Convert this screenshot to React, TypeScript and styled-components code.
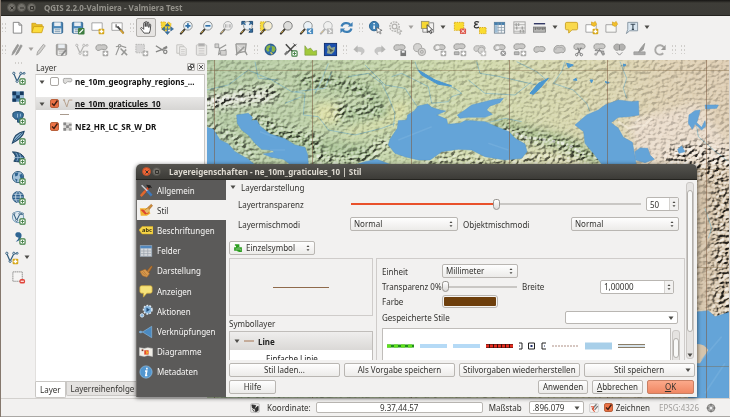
import React, { ReactNode } from "react";
import styled, { createGlobalStyle, css } from "styled-components";

const GlobalStyle = createGlobalStyle`
  * { box-sizing: border-box; }
  body { margin: 0; background: #f2f1f0; }
  body, button, input, select { font-family: "Noto Sans", "Open Sans", sans-serif; font-size: 8px; color: #33322f; }
`;

/* ---------- Shared icon parts ---------- */

const G = "#979795";
const L = "#d2d1cf";

const Plus = () => (
  <g>
    <rect x="9.5" y="9.5" width="5.5" height="5.5" rx="1" fill="#fff" stroke="#3d7d3f" strokeWidth="1.2" />
    <path d="M12.25 10.8v3M10.8 12.25h3" stroke="#3d7d3f" strokeWidth="1" />
  </g>
);
const Star = ({ c = "#d5a514" }: { c?: string }) => (
  <g>
    <rect x="9.2" y="9.2" width="6" height="6" rx="1" fill={c} />
    <path d="M12.2 10.2v4M10.2 12.2h4" stroke="#fff" strokeWidth="1.5" />
  </g>
);
const Mag = ({ fill = "#eaf1f6", rim = "#8a8e8f", handle = "#3e3a30" }) => (
  <g>
    <path d="M2 14.5 6.5 9.5" stroke={handle} strokeWidth="2.2" strokeLinecap="round" />
    <path d="M4.5 11.5 2.5 13.7" stroke="#d8a73c" strokeWidth="1" />
    <circle cx="9.5" cy="6.2" r="4.6" fill={fill} stroke={rim} strokeWidth="1" />
  </g>
);
const Blob = ({ y = 0 }: { y?: number }) => (
  <path transform={`translate(0 ${y})`} d="M2 6C2 3 5 2.5 8 3.2c2-.6 6-.5 6 2.3 0 2.8-3 3.3-4.5 2.4C7.500 7 6 9.500 4 9 2.500 8.600 2 7.500 2 6Z" fill="#c9c8c6" stroke={G} strokeWidth="1" />
);
const Nodes = ({ c = "#315d7d" }: { c?: string }) => (
  <g stroke={c} fill="#fff">
    <path d="M3 4 6.500 12 10.500 4M10.500 4h3" fill="none" strokeWidth="1.300" />
    <circle cx="3" cy="3.500" r="1.200" /><circle cx="6.500" cy="12" r="1.200" /><circle cx="10.500" cy="3.500" r="1.200" /><circle cx="14" cy="3.500" r="1" />
  </g>
);
const Disk = ({ a, b }: { a: string; b: string }) => (
  <g>
    <rect x="2.500" y="2.500" width="11" height="11.500" rx="1" fill={a} stroke={b} />
    <rect x="4.500" y="2.500" width="7" height="4" fill="#e9eef2" />
    <rect x="4" y="9" width="8" height="5" fill="#f4f4f2" />
    <path d="M5 10.500h6M5 12.500h6" stroke={b} strokeWidth=".7" />
  </g>
);
const Globe = ({ c = "#3f7fae" }: { c?: string }) => (
  <g fill="none" stroke="#1f4f77">
    <circle cx="7.500" cy="7.500" r="5.800" fill={c} />
    <ellipse cx="7.500" cy="7.500" rx="2.600" ry="5.800" stroke="#dfeaf2" strokeWidth=".8" />
    <path d="M1.800 7.500h11.500M2.800 4.500h9.500M2.800 10.500h9.500" stroke="#dfeaf2" strokeWidth=".8" />
  </g>
);

const icons: Record<string, ReactNode> = {
  fileNew: <path d="M3.500 2.500h6l3 3v8.500h-9ZM9.500 2.500v3h3" fill="#fff" stroke="#777" strokeWidth=".9" />,
  open: (
    <g stroke="#c99a12" strokeWidth=".8">
      <path d="M2 13V3.500h4l1 1.500h6v2" fill="#e9bf26" />
      <path d="M2 13.500 4 7h10.500l-2 6.500Z" fill="#fbdc3c" />
    </g>
  ),
  save: <Disk a="#4a87b8" b="#2f628b" />,
  saveAs: (<g><Disk a="#4a87b8" b="#2f628b" /><rect x="8.500" y="8.500" width="7" height="7" rx="1" fill="#3d7d3f" /><path d="m10 14 4-4" stroke="#fff" strokeWidth="1.500" /></g>),
  composer: (<g><path d="M2 3h11v8H2Z" fill="#fff" stroke="#999" strokeWidth=".9" /><Star /></g>),
  composerMgr: (
    <g><path d="M2 3h11v8H2Z" fill="#fff" stroke="#999" strokeWidth=".9" /><path d="m8 7 6.500 7" stroke="#454545" strokeWidth="2" /><path d="m11 10.500 3.500 4" stroke="#d6a434" strokeWidth="1.800" /><path d="M6.500 4.500v3h3" fill="none" stroke="#555" strokeWidth="1.200" /></g>
  ),
  pan: <path d="M5.500 14 2 9.500c-.8-1.200.6-2 1.500-1L5 10V3.500c0-1.200 1.600-1.200 1.700 0V7 2.500c0-1.200 1.700-1.200 1.800 0V7l.3-4c.1-1.200 1.700-1 1.700.2V8l.5-3c.3-1 1.600-.7 1.500.4L12 11l-1 3Z" fill="#fff" stroke="#333" strokeWidth=".9" strokeLinejoin="round" />,
  panSel: (
    <g><path d="M2 2h5v3l3-3 3 2-1 5-5 3-4-2Z" fill="#f8d835" stroke="#dba514" strokeWidth=".8" strokeDasharray="1.500 1" /><path d="m9 3.500 2.500 3h-5ZM9 15.500l2.500-3h-5ZM3 9.500 6 7.200v4.600ZM15.500 9.500l-3-2.300v4.600Z" fill="#3774a8" stroke="#234e75" strokeWidth=".5" /><path d="M9 7v5.500M6.500 9.700H12" stroke="#3774a8" strokeWidth="1" /></g>
  ),
  zoomIn: (<g><Mag /><path d="M9.500 3.500v5.400M6.800 6.200h5.400" stroke="#2f70a8" strokeWidth="1.800" /></g>),
  zoomOut: (<g><Mag /><path d="M6.800 6.200h5.400" stroke="#2f70a8" strokeWidth="1.800" /></g>),
  zoomOne: (<g opacity=".7"><Mag fill="#eee" /><path d="M7.300 4.500v3.600M11.700 4.500v3.600M9.500 5v.8M9.500 7v.8" stroke="#666" strokeWidth="1" /></g>),
  zoomFull: (<g><Mag /><path d="M6.500 1.500h-3.500v3.500ZM11 1.500h3.500v3.500ZM14.500 9v4h-4Z" fill="#376f9f" stroke="#1f4a71" /><path d="m4 3 3 2M13 3l-2 2M13 12l-2-3" stroke="#376f9f" strokeWidth="1.500" /></g>),
  zoomSel: (<g><path d="M1.500 2h6v9h-6Z" fill="#f7dc3c" stroke="#d9ad17" strokeDasharray="1.500 1" /><Mag fill="#f5ecd0" /></g>),
  zoomLayer: <Mag fill="#dcdcda" rim="#777" />,
  zoomLast: (<g><Mag /><rect x="8.500" y="9" width="6.500" height="6" fill="#4a8bbf" /><path d="m13 10-2.500 2 2.500 2" fill="none" stroke="#fff" strokeWidth="1.200" /></g>),
  zoomNext: (<g opacity=".6"><Mag fill="#eee" handle="#888" /><rect x="8.500" y="9" width="6.500" height="6" fill="#999" /><path d="m10.500 10 2.500 2-2.500 2" fill="none" stroke="#fff" strokeWidth="1.200" /></g>),
  refresh: (<g fill="none" stroke="#3d7fb5" strokeWidth="2.400"><path d="M2.800 7C3.500 3 9.500 2 12 5M13.200 9C12.500 13 6.500 14 4 11" /><path d="M14.500 2v5h-5ZM1.500 14V9h5Z" fill="#3d7fb5" stroke="none" /></g>),
  identify: (<g><circle cx="6.500" cy="6.500" r="5" fill="#3e81b5" stroke="#2b618e" /><path d="M6.500 5.800V9.500M6.500 3.300v1.300" stroke="#fff" strokeWidth="1.600" /><path d="m9 8 6 3-2.500.7 1.500 2.500-1 .7-1.600-2.500L10 14Z" fill="#fff" stroke="#555" strokeWidth=".7" /></g>),
  action: (<g fill="none" stroke="#b4b3b0"><circle cx="7" cy="7" r="5" strokeWidth="1.500" strokeDasharray="2 1" /><circle cx="7" cy="7" r="2.500" strokeWidth="1.300" /><path d="m10 9 5 3-2.500.5 1 2.500-1.200.5-1-2.500-1.500 1Z" fill="#eee" /></g>),
  select: (<g><rect x="1.500" y="1.500" width="8" height="7.500" fill="#f7d832" stroke="#9c9568" /><path d="M10 3h4.500v10H3V9.500" fill="none" stroke="#888" /><path d="m7.500 5 6 5.500-2.500.3 1.600 3-1.300.7-1.500-3-2 1.700Z" fill="#fff" stroke="#333" strokeWidth=".9" /></g>),
  deselect: (<g><rect x="2.500" y="2.500" width="10" height="8.500" fill="#fadc30" stroke="#d8a912" strokeDasharray="1.500 1" /><rect x="8.500" y="9" width="6.500" height="6" rx="1" fill="#dd5a4d" /><path d="m10 10.500 3.500 3.200m0-3.200L10 13.700" stroke="#fff" strokeWidth="1" /></g>),
  epsilon: (<g><path d="M7.500 2.500C5 1 2.500 2 3 3.500c.3 1 1.800 1.300 3 1.200C4 4.800 2.300 5.600 2.500 7c.3 1.700 3.500 1.800 5 .5" fill="none" stroke="#333" strokeWidth="1.300" /><rect x="8" y="8" width="7" height="6.500" fill="#fadc30" stroke="#d8a912" strokeDasharray="1.500 1" /></g>),
  table: (<g><rect x="2.500" y="2.500" width="11" height="11.500" fill="#f3f5f7" stroke="#6c7d8a" strokeWidth=".9" /><rect x="2.500" y="2.500" width="11" height="2.800" fill="#447fae" /><path d="M3 8h10M3 11h10M6.500 3v11M10 3v11" stroke="#8b9dab" strokeWidth=".8" /><rect x="3" y="5.500" width="3" height="8" fill="#9ebdd5" /></g>),
  abacus: (<g fill="none" stroke="#a2a2a0"><rect x="2" y="2" width="12" height="12" /><path d="M2 5h12M2 8.500h12M2 12h12" strokeWidth=".8" /><path d="M4.500 3.500v3M7 3.500v3M11 7v3M5 7v3M9 10.500v3M12 10.500v3" strokeWidth="1.600" /></g>),
  measure: (<g><path d="M2 4h12" stroke="#151c50" strokeWidth="1.300" /><rect x="1.500" y="7.500" width="13" height="5.500" fill="#b5b5b3" stroke="#777" strokeWidth=".8" /><path d="M3.500 8v2.500M5.500 8v2M7.500 8v2.500M9.500 8v2M11.500 8v2.500M13 8v2" stroke="#444" strokeWidth=".8" /></g>),
  tip: <path d="M3 2.500h10q1.500 0 1.500 1.500v5q0 1.500-1.500 1.500H8.500L5 14v-3.500H3Q1.500 10.500 1.500 9V4Q1.500 2.500 3 2.500Z" fill="#f9d94d" stroke="#c79c1b" strokeWidth=".9" />,
  bookNew: (<g><path d="M2 5h11v8H2Z" fill="#fff" stroke="#999" strokeWidth=".9" /><path d="m8 2 2 1 2-1.500 1.500 3L11 7 8 5.500Z" fill="#f3c02b" stroke="#c99514" strokeWidth=".6" /><Star /></g>),
  book: (<g><path d="M2 5h11v8H2Z" fill="#f7f7f5" stroke="#999" strokeWidth=".9" /><path d="m9 2 2 1 2-1.500 1.500 3L12 7 9 5.500Z" fill="#f3c02b" stroke="#c99514" strokeWidth=".6" /></g>),
  label: (<g><path d="M4 2.500h10.500v9H6L2.500 14.500 4 10Z" fill="#d9e6f0" stroke="#7d8c98" strokeWidth=".9" /><path d="M7 4.500h5M9.500 4.500V10M8.300 10h2.400" stroke="#3a4a57" strokeWidth="1.200" /></g>),

  pencils: (<g stroke={G} fill={G}><path d="m2 14 1-3.500L8 2.500l1.500 1L4.500 12ZM6 14l1-3L11.500 3l1.500 1-4.500 8Z" strokeWidth=".8" /></g>),
  pencil: <path d="m3 14 .8-3.500L10 2.500l2 1.500L6 12Z" fill={L} stroke="#a5a4a2" />,
  saveGray: (<g><Disk a="#aaa9a7" b={G} /><path d="m7 14 5-6 1.500 1.300L8.500 15Z" fill="#888" /></g>),
  nodeGray: (<g opacity=".6"><Nodes c="#8b8b89" /><Star c="#8f8f8d" /></g>),
  blobGray: (<g><Blob /><Star c="#a5a4a2" /></g>),
  nodeTool: (<g stroke={G} strokeWidth="1.200" fill="none"><path d="m2 14 4-10M2 5l5-1 6 2" /><circle cx="6" cy="4" r="1.300" fill="#eee" /><path d="m7 7 7 7M8 14l5-6" strokeWidth="1.600" /></g>),
  del: (<g opacity=".7"><rect x="2" y="2.500" width="9" height="9" fill="#ccc" stroke={G} strokeDasharray="1.500 1" /><Star c="#8f8f8d" /></g>),
  cut: (<g stroke="#858583" fill="none" strokeWidth="1.300"><path d="m2 4 8 5M2 10.500 14 6" /><circle cx="12" cy="10.500" r="1.800" /><path d="m10 7 4-2" strokeWidth="2" /></g>),
  copy: (<g fill="#eeedeb" stroke="#c2c1bf"><path d="M3 3h6l1.500 1.500V12H3Z" /><path d="M6 5h5l2 2v7H6Z" /><path d="M7.500 8h4M7.500 10h4M7.500 12h4" strokeWidth=".7" /></g>),
  paste: (<g fill="#e9e8e6" stroke="#c0bfbd"><rect x="2.500" y="3" width="11" height="11" rx="1" /><rect x="5" y="1.800" width="6" height="2.500" fill="#aaa" /><path d="M5 7h6M5 9.500h6M5 12h6" strokeWidth=".8" /></g>),
  vTool: (<g stroke={G} fill={L}><path d="m2 3 4 4 7-4M6 7l-1 6 8-5" fill="none" strokeWidth="1.300" /><path d="M7 9h6v5H7ZM1 2h4v4H1Z" strokeWidth=".8" /></g>),
  areaTool: (<g stroke={G} fill={L}><path d="M2 2h11l-1 8 2 4M2 2l1 10 9-2" strokeWidth="1.300" /><path d="m2 14 9-9" strokeWidth="1.600" /></g>),
  earth: (<g><circle cx="8" cy="8" r="5.800" fill="#2f6faa" stroke="#1d4875" /><path d="M4 4.500 7.500 3 8 5.500 6 7l1 2.500-2 1L3 8ZM9 4l3.500 1 1 3-2 3-2.500-1 .5-3Z" fill="#8cb544" /><path d="M8 11l2 2" stroke="#d8c556" strokeWidth="1.500" /></g>),
  wrench: (<g><path d="M3 2.500 13 13M13 3 4 12" stroke="#4a4a48" strokeWidth="1.600" /><path d="M2 13.500 5 10" stroke="#777" strokeWidth="2.400" /><path d="m11 1.500 3 3M14.500 2l-2 2" stroke="#555" /><Plus /></g>),
  profile: <path d="M2 14V4l3 4 3-1.500 3 3.500 3.500-1V14Z" fill="#a2c93a" stroke="#7c9c3e" strokeWidth=".7" />,
  bluemap: (<g><rect x="1.500" y="1.500" width="13" height="13" fill="#1b4fae" stroke="#0f2f70" /><path d="M4 5 7 3l2 3 4-1-1 5-3 3-5-1 1-4Z" fill="#8fa38c" /><path d="m6 6 5 3-3 2Z" fill="#4b5b4e" /></g>),
  undo: (<g opacity=".6"><path d="M4 6.500c5-2 9 0 9 3 0 1.500-1 3-3.500 4 2-3 .5-4-5.500-3.500" fill="#aaa" stroke={G} strokeWidth=".6" /><path d="m1.500 8 4.500-4.500v8Z" fill="#8f8f8d" /></g>),
  redo: (<g opacity=".6" transform="translate(16 0) scale(-1 1)"><path d="M4 6.500c5-2 9 0 9 3 0 1.500-1 3-3.500 4 2-3 .5-4-5.500-3.500" fill="#aaa" stroke={G} strokeWidth=".6" /><path d="m1.500 8 4.500-4.500v8Z" fill="#8f8f8d" /></g>),
  blobSave: (<g><Blob /><rect x="9" y="9" width="6" height="6" fill="#777" /><rect x="10.500" y="9.500" width="3" height="2" fill="#eee" /></g>),
  rings: (<g fill="#d4d3d1" stroke="#a5a4a2"><circle cx="6" cy="6" r="4.300" /><circle cx="10.500" cy="10.500" r="4" /><circle cx="10.500" cy="10.500" r="1.500" /></g>),
  blobRing: (<g><Blob /><circle cx="6" cy="5.800" r="2" fill="#f2f1f0" /><Star c="#a9a8a6" /></g>),
  blobDual: (<g><Blob y={-1} /><path d="M2.500 10.500h5v3h-5Z" fill="#bbb" stroke={G} /><Star c="#a9a8a6" /></g>),
  blobFade: (<g opacity=".8"><Blob y={1} /><circle cx="10" cy="9" r="3.500" fill={L} stroke={G} /><Star c="#b3b2b0" /></g>),
  blobDel: (<g><Blob /><circle cx="6" cy="6" r="1.800" fill="#eee" /><circle cx="12" cy="12" r="3" fill="#999" /><path d="m10.800 10.800 2.400 2.400m0-2.400-2.400 2.400" stroke="#fff" /></g>),
  reshape: <Blob y={2} />,
  offset: (<g><path d="M2 9c0-4 3-6 6-5 3-1 6 0 6 4 0 3-2 4-4 3-3 1-8 2-8-2Z" fill="#c9c8c6" stroke={G} /><path d="M4 8.500c0-3 2-3 4-2.500 3-.5 4 0 4 2.300" fill="none" stroke="#aaa" /></g>),
  split: (<g><Blob y={-1} /><path d="m5 14 5-8M9.500 14 6 6" stroke="#777" strokeWidth="1.200" /><circle cx="5" cy="13.500" r="1.300" fill="#eee" stroke="#777" /><circle cx="10" cy="13.500" r="1.300" fill="#eee" stroke="#777" /></g>),
  splitTwo: (<g><Blob y={-1} /><path d="m4 14 4-6 4 6M3 9l10 1" stroke="#888" strokeWidth="1.200" fill="none" /><circle cx="4" cy="13" r="1.500" fill="#aaa" /><circle cx="12" cy="12.500" r="1.800" fill="#999" /></g>),
  merge: (<g><path d="M8 3C5 1 1.500 3 2 6c.5 3 4 4 6 1.500C10 10 13.500 9 14 6c.5-3-3-5-6-3Z" fill="#b3b2b0" stroke={G} /><path d="M8 3v6M5 11l3 3 3-3" stroke="#888" fill="none" /></g>),
  brush: (<g><path d="M2 13.500h12v-3H2Z" fill="#aaa" stroke={G} strokeWidth=".8" /><path d="m7 11 2-4 4.500-5.500L12 8Z" fill="#999" stroke={G} /></g>),
  rotate: (<g><path d="M12 12A5 5 0 1 1 12.500 5.500" fill="none" stroke="#aaa9a7" strokeWidth="2" /><path d="m14.500 3v5.500H9.500Z" fill="#9b9a98" /></g>),

  vector: (<g><Nodes /><Plus /></g>),
  raster: (<g><rect x="1.500" y="1.500" width="12" height="11" fill="#5b8db8" /><path d="M1.500 1.500h4v4h-4ZM9.500 1.500h4v4h-4ZM5.500 5.500h4v3.500h-4ZM1.500 9h4v3.500h-4Z" fill="#16385c" /><path d="M9.500 5.500h4V9h-4Z" fill="#9dbdd8" /><Plus /></g>),
  postgis: (<g><path d="M2 3.500C4 1 11 1 13 3.500c1 3-1 6-3 6.500v3H7V9.500L5 10 2 7Z" fill="#3b719d" stroke="#1c4668" /><path d="M7 4v4M10 4v3" stroke="#a2c2dc" /><Plus /></g>),
  spatialite: (<g><path d="M1.500 14C3 7 8 2.500 14 1.500 13 7 7 11 1.500 14Z" fill="#89b0cf" stroke="#1f4566" strokeWidth="1.200" /><path d="M3 12 12 3" stroke="#315d7d" /><Plus /></g>),
  mssql: (<g><path d="M1.500 2C7 2 12 4 14 8l-3 5-8-1C6 8 5 5 1.500 2Z" fill="#315f88" stroke="#173c5b" /><path d="M5 3c3 3 3 6 1 9M9 4c2 3 2 6 0 9M3 8h10" stroke="#9dbdd8" fill="none" strokeWidth=".8" /><Plus /></g>),
  wms: (<g><circle cx="7.500" cy="7.500" r="6" fill="#a5c3da" stroke="#315d7d" /><path d="M4 3.500 8 2.500 7 6 4.500 7ZM9 5l3-1 1 4-2.500 2ZM4 9l3 1-1 3Z" fill="#2f6592" /><Plus /></g>),
  wcs: (<g><Globe c="#2b5f8e" /><Plus /></g>),
  wfs: (<g><circle cx="7.500" cy="7.500" r="6" fill="#dce7ef" stroke="#7097b4" /><g transform="translate(.5 1) scale(.85)"><Nodes /></g><Plus /></g>),
  comma: (<g><path d="M6.500 2.500c4-1 5.500 2 4.500 5-1 3-3 4.500-6 5 1.500-1.500 3-2.500 3-4.500-3 .5-5-4-1.500-5.500Z" fill="#2f6592" /><Plus /></g>),
  newVector: (<g><Nodes /><Star /></g>),
  remove: (<g><rect x="2" y="2" width="10" height="10" fill="#f6f5f4" stroke="#8d8d8b" strokeDasharray="1.500 .5" /><rect x="9" y="9.500" width="6" height="5" rx="2" fill="#e0443a" /><path d="M10.300 12h3.400" stroke="#fff" strokeWidth="1.200" /></g>),

  general: (<g><path d="m3 14 9-10" stroke="#dc4a24" strokeWidth="2.600" /><path d="m2 15 5-5.500" stroke="#dd6b30" strokeWidth="2.600" /><path d="m3 2.500 8 8" stroke="#c9ccd0" strokeWidth="1.600" /><path d="m9.500 9 5 5.500" stroke="#3e77b8" strokeWidth="2.800" /><path d="m8 2 5 .5 2 3.500-2-1-2 1.500Z" fill="#222" /></g>),
  style: (<g><path d="M1 6h10l2 6-4 2.500H2Z" fill="#f0b432" /><path d="M2 8c3-2 5 2 8 0l1 4-4 1Z" fill="#dc4530" /><path d="m7 8 3-3 4-3.500L15.500 3 12 7l-2 4Z" fill="#cd8d38" stroke="#a05e22" strokeWidth=".6" /><path d="M6 8.500 10.500 6 12 9l-3 3Z" fill="#e8bb68" /></g>),
  labels: (<g><path d="M0 8 3.500 4H16v8.500H3.500Z" fill="#f6d648" stroke="#d6aa22" strokeWidth=".6" /><text x="3.500" y="10.500" fontSize="6.500" fontWeight="700" fill="#3d3410">abc</text></g>),
  fields: (<g><rect x="1.500" y="2" width="13" height="12" fill="#d7dade" stroke="#a1aebb" /><rect x="1.500" y="2" width="13" height="3" fill="#5388bd" /><path d="M5.500 5v9M10 5v9M2 8h12M2 11h12" stroke="#9aa2aa" strokeWidth=".8" /></g>),
  rendering: (<g><path d="m8 9 6-7 1.500 1-5 8Z" fill="#b97936" stroke="#80501f" strokeWidth=".6" /><path d="M1 8.500 7 6l5 5-3 4-5-1.500Z" fill="#d99a4e" stroke="#a76b2c" strokeWidth=".7" /><path d="m3 9 4 4M5 8l4 5" stroke="#9b632b" strokeWidth=".6" /></g>),
  display: <path d="M3 2h10q2 0 2 2v4.500q0 2-2 2H9L5 15v-4.500H3q-2 0-2-2V4q0-2 2-2Z" fill="#f6e37b" stroke="#d0a938" strokeWidth=".8" />,
  actions: (<g fill="#86b5dc"><circle cx="10" cy="6.500" r="4.500" stroke="#dfe9f2" strokeWidth="2.400" strokeDasharray="2 1.200" /><circle cx="10" cy="6.500" r="4" /><path d="m8.500 4 4 2.500-4 2.500Z" fill="#244f7c" /><circle cx="3.500" cy="13" r="2" stroke="#dfe9f2" /></g>),
  joins: (<g><path d="M4 8 14.500 1.500v13Z" fill="#4b8ac1" stroke="#8dbbe0" strokeWidth=".7" /><path d="M0 8h4M2 6.500v3" stroke="#79aeda" strokeWidth="1.500" /></g>),
  diagrams: (<g><path d="M.5 3 6 4l4-1 5.500 1v9L10 12l-4 1-5.500-1Z" fill="#f1eee7" stroke="#ccc" strokeWidth=".6" /><path d="M6 6h5v5H6Z" fill="#e24a2c" /><path d="M3 5h2v2H3Z" fill="#7c3627" /><path d="m8 6 3 2.500L8.500 11Z" fill="#f1b530" /></g>),
  metadata: (<g><circle cx="8" cy="8" r="7" fill="#5296cf" stroke="#91c1e8" strokeWidth=".8" /><path d="M9 3v2M7 7h1.800L7.800 12H9.500" stroke="#fff" strokeWidth="1.800" fill="none" /></g>),
  lineSym: (<g fill="none" stroke="#b29a84"><path d="m3 3 4 10 3-10h5" strokeWidth="1.300" /><circle cx="3" cy="3" r="1" /></g>),
  polySym: <path d="M2 5q0-2 3-1.500h8q1.500 0 1.300 3-.3 3-4 2l-2-.5-3 3Q2 11 2 8Z" fill="#dedddb" stroke="#8e8e8c" />,
  rasterSym: (<g><rect x="2" y="2" width="12" height="12" fill="#d8d7d5" /><path d="M2 2h4v4H2ZM6 6h4v4H6ZM2 10h4v4H2ZM10 4h4v3h-4Z" fill="#888" /><path d="M10 10h4v4h-4Z" fill="#a2a19f" /></g>),
  cursorPos: (<g><rect x="1" y="1" width="14" height="14" rx="2" fill="#e9e8e6" stroke="#aaa" /><path d="m3 3 6 1-2 5-3-1ZM8 9l5-4v7l-4 2ZM4 10l3 4" fill="#333" stroke="#222" strokeWidth="1.200" /></g>),
  stop: (<g><rect x="1" y="1" width="14" height="14" rx="2" fill="#f7f5f3" stroke="#bbb" /><path d="m5 10 7-8M9 11l5-6" stroke="#777" strokeWidth="2" /><path d="M3 6h4v4M5 9l4 5" stroke="#e15233" strokeWidth="1.800" fill="none" /></g>),
  crs: (<g><circle cx="8" cy="8" r="6" fill="#b5b4b2" stroke="#7c7b79" strokeWidth="1.500" /><circle cx="8" cy="8" r="3" fill="#eee" stroke="#888" /><path d="M8 1v4M8 11v4M1 8h4M11 8h4" stroke="#666" strokeWidth="1.500" /></g>),
  single: (<path d="M3 3h6v2H6v3h7v5h-3v-2H3V8h3M10 13l-3-1" fill="none" stroke="#2c9e20" strokeWidth="2.400" />),
};

const Svg = styled.svg<{ $s?: number }>`
  display: block;
  flex: none;
  width: ${(p) => p.$s ?? 15}px;
  height: ${(p) => p.$s ?? 15}px;
`;
const Icon = ({ name, size }: { name: string; size?: number }) => (
  <Svg $s={size} viewBox="0 0 16 16" aria-hidden="true">{icons[name]}</Svg>
);

/* ---------- Window frame ---------- */

const Window = styled.div`
  position: relative;
  display: flex;
  flex-direction: column;
  min-height: 100vh;
  background: #f2f1f0;
  border-left: 1px solid #85786d;
`;
const TitleBar = styled.header<{ $dialog?: boolean }>`
  display: flex;
  flex: none;
  align-items: center;
  height: 16px;
  gap: 1px;
  padding-left: 6px;
  color: ${(p) => (p.$dialog ? "#dfdbd2" : "#94928b")};
  background: linear-gradient(${(p) => (p.$dialog ? "#55544f, #3c3b37" : "#161513, #3e3d38 20%, #3c3b37")});
  border-bottom: 1px solid #24231f;
  border-radius: ${(p) => (p.$dialog ? "5px 5px 0 0" : "0")};
`;
const WindowButton = styled.button<{ $active?: boolean }>`
  width: 9px;
  height: 9px;
  padding: 0;
  display: grid;
  place-items: center;
  border: 1px solid ${(p) => (p.$active ? "#b9512c" : "#55534d")};
  border-radius: 50%;
  background: ${(p) => (p.$active ? "#ee6536" : "#73716b")};
  color: #33312d;
`;
const WinTitle = styled.h1`
  margin: 0 0 0 7px;
  font-size: 8px;
  line-height: 14px;
  font-weight: 700;
  white-space: nowrap;
`;
const WinGlyph = ({ d }: { d: string }) => (
  <Svg $s={6} viewBox="0 0 6 6" aria-hidden="true"><path d={d} fill="none" stroke="currentColor" /></Svg>
);

/* ---------- Toolbars ---------- */

const Grip = styled.span<{ $flat?: boolean }>`
  flex: none;
  width: ${(p) => (p.$flat ? 8 : 5)}px;
  height: ${(p) => (p.$flat ? 5 : 10)}px;
  margin: ${(p) => (p.$flat ? "0 0 1px" : "0 2px")};
  background-image: radial-gradient(#d0cecb 1px, transparent 1px);
  background-size: 3px 4px;
`;
const ToolBar = styled.div`
  display: flex;
  flex: none;
  align-items: center;
  height: 22px;
  ${Grip}:first-child { margin: 0 1px 0 0; }
`;
const ToolButton = styled.button<{ $on?: boolean; $w?: number }>`
  flex: none;
  display: grid;
  place-items: center;
  width: ${(p) => p.$w ?? 20}px;
  height: 19px;
  padding: 0;
  border: 1px solid ${(p) => (p.$on ? "#b0aeab" : "transparent")};
  border-radius: 2px;
  background: ${(p) => (p.$on ? "#e6e4e2" : "none")};
`;
const Caret = ({ faint }: { faint?: boolean }) => (
  <Svg $s={6} viewBox="0 0 6 6" aria-hidden="true"><path d="M0.500 1.500h5L3 5Z" fill={faint ? "#a3a19e" : "#4d4c48"} /></Svg>
);
/* "|" is a grip; v, w and x are drop-down arrows: normal, disabled, disabled and tight. */
const Tools = ({ items }: { items: string }) => (
  <>
    {items.split(" ").map((n, i) =>
      n === "|" ? <Grip key={i} />
      : /^[vwx]$/.test(n) ? <ToolButton key={i} $w={n === "x" ? 4 : 12} aria-label="Mehr"><Caret faint={n !== "v"} /></ToolButton>
      : <ToolButton key={i} $on={n === "pan"} aria-label={n}><Icon name={n} /></ToolButton>
    )}
  </>
);

const Work = styled.div`
  display: flex;
  flex: 1;
  min-height: 0;
`;
const SideTools = styled.div`
  flex: none;
  width: 34px;
  display: flex;
  flex-direction: column;
  align-items: center;
  padding-top: 1px;
  button { height: 20px; }
`;
const SplitTool = styled.div`
  display: flex;
  align-self: stretch;
`;

/* ---------- Layer panel ---------- */

const LayerPanel = styled.section`
  flex: none;
  width: 170px;
  display: flex;
  flex-direction: column;
  margin-right: 2px;
`;
const PanelHead = styled.div`
  display: flex;
  align-items: center;
  gap: 2px;
  height: 14px;
  h2 { flex: 1; margin: 0; padding-left: 1px; font-size: 8px; font-weight: 400; }
`;
const TinyButton = styled.button`
  width: 8px;
  height: 8px;
  padding: 0;
  display: grid;
  place-items: center;
  border: 1px solid #b5b3b0;
  border-radius: 1px;
  background: #f2f1f0;
  color: #555;
`;
const Tree = styled.div`
  flex: 1;
  background: #fff;
  border: 1px solid #c9c7c4;
  border-left-color: #e2e0de;
`;
const TreeRow = styled.div<{ $sel?: boolean }>`
  display: flex;
  align-items: center;
  height: 13px;
  margin-bottom: ${(p) => (p.$sel ? 0 : 9)}px;
  padding-left: 3px;
  font-weight: 700;
  color: #111;
  background: ${(p) => (p.$sel ? "linear-gradient(#e9e8e7, #d6d5d3)" : "none")};
  label { margin-left: 2px; white-space: nowrap; text-decoration: ${(p) => (p.$sel ? "underline" : "none")}; }
`;
const Expander = styled.span`
  width: 11px;
  flex: none;
`;
const Check = styled.input`
  appearance: none;
  flex: none;
  width: 9px;
  height: 9px;
  margin: 0 3px 0 0;
  border: 1px solid #aaa7a3;
  border-radius: 2px;
  background: #fff;
  &:checked {
    border-color: #b9613c;
    background: #ec7245 url("data:image/svg+xml,%3Csvg xmlns='http://www.w3.org/2000/svg' viewBox='0 0 8 8'%3E%3Cpath d='M1.500 4 3.500 6 7 1' fill='none' stroke='%23402015' stroke-width='1.400'/%3E%3C/svg%3E") center / 8px;
  }
`;
const SymbolRow = styled.div`
  height: 10px;
  margin-left: 24px;
  padding-top: 4px;
  &::after { content: ""; display: block; width: 9px; height: 1px; background: #a99b8e; }
`;
const TabRow = styled.div`
  display: flex;
  height: 16px;
`;
const Tab = styled.button<{ $on?: boolean }>`
  padding: 0 4px;
  height: ${(p) => (p.$on ? 16 : 14)}px;
  border: 1px solid #c9c7c4;
  border-top: 0;
  border-radius: 0 0 2px 2px;
  background: ${(p) => (p.$on ? "#fff" : "#e4e2e0")};
  white-space: nowrap;
`;

/* ---------- Map ---------- */

const MapSvg = styled.svg`
  display: block;
  flex: 1;
  min-width: 0;
  align-self: stretch;
  border-right: 1px solid #d9d7d5;
`;
const Sea = styled.path`
  fill: #64a4d8;
  stroke: #5798cc;
  stroke-width: 1.500px;
`;
const River = styled.path`
  fill: none;
  stroke: #74aec0;
  stroke-width: 2px;
`;
const Relief = styled.g`
  mix-blend-mode: hard-light;
`;

const MapView = () => (
  <MapSvg viewBox="207 60 522 338" preserveAspectRatio="xMinYMin slice" role="img" aria-label="Karte">
    <defs>
      <linearGradient id="land" x1="0" x2="1">
        <stop offset="0" stopColor="#b5cba5" />
        <stop offset=".3" stopColor="#c1d3a8" />
        <stop offset=".52" stopColor="#d1d9ac" />
        <stop offset=".72" stopColor="#d9d7af" />
        <stop offset=".88" stopColor="#dfd1b3" />
        <stop offset="1" stopColor="#dfceb4" />
      </linearGradient>
      <filter id="soft"><feGaussianBlur stdDeviation="12" /></filter>
      <filter id="relief" x="0" y="0" width="1" height="1" colorInterpolationFilters="sRGB">
        <feTurbulence type="fractalNoise" baseFrequency=".22 .3" numOctaves="3" seed="7" />
        <feDiffuseLighting surfaceScale="2.6" lightingColor="#fff">
          <feDistantLight azimuth="225" elevation="31" />
        </feDiffuseLighting>
      </filter>
      <mask id="hills">
        <rect x="200" y="60" width="530" height="340" fill="#383838" />
        <g transform="translate(205 60) scale(.33333)" filter="url(#soft)" fill="none" stroke="#fff" strokeLinecap="round">
          <path d="M0 130 200 100" strokeWidth="50" />
          <path d="M290 60 400 70 480 90 520 150 400 165M410 130 400 180" strokeWidth="26" />
          <path d="M150 180 240 220 330 240 340 300 480 290 540 250" strokeWidth="34" />
          <path d="M10 195 80 230 150 290" strokeWidth="22" />
          <path d="M670 310 740 290 860 315 1000 295 1120 300" strokeWidth="24" />
          <path d="M890 205 980 235 1100 260 1180 305" strokeWidth="30" />
          <path d="M1430 300 1570 310V760" strokeWidth="100" />
        </g>
      </mask>
    </defs>
    <rect x="207" y="60" width="522" height="338" fill="url(#land)" />
    <g transform="translate(205 60) scale(.33333)">
      <g filter="url(#soft)">
        <path d="M0 130 200 105" stroke="#dcdccf" strokeWidth="30" />
        <path d="M330 130h70v60h-70ZM560 130l60 0-40 60-160 40 0-20 130-30Z" fill="#dde0a8" />
        <path d="M280 60 400 70 500 95 530 150 400 165M100 200 340 260 500 280" stroke="#a6c092" strokeWidth="36" fill="none" />
        <path d="M860 190 960 220 1080 250 1190 300" stroke="#a9bd8d" strokeWidth="46" fill="none" />
        <path d="M1270 180 1480 130 1570 250V310H1300Z" fill="#eadccb" />
        <path d="M1450 320h130v430h-130Z" fill="#d3c1a7" />
      </g>
      <River d="M5 90 70 75 130 30 200 60 260 95 300 100 295 165 340 170 370 210 450 225 530 205 570 190M150 5l10 50 60 5M240 130l50-20M370 10 350 60 330 100M430 50l60-10 40 30 20 40 20 50-5 40M480 15l60 60 60 10 40 60M560 50l30-10 80 40 10 50M270 95l90-10 20-50" />
      <River d="M630 5l10 30 50 30 60 20 20 15-30 10-10 15-50 5M815 5l10 35 60 10 110 25 30-15-30-25-60-30M930 105l50-40M930 105l-90-5-50-40M1080 5l-10 30-25 35 60 20 40 40 10 25M1245 5l20 50-10 30 10 30M840 190l60-15 50 10M1475 200l5 30 40 35 50 40M1500 445l20 60-10 30" />
    </g>
    <Relief mask="url(#hills)" opacity=".85">
      <rect x="207" y="60" width="522" height="338" filter="url(#relief)" />
    </Relief>
    <g transform="translate(205 60) scale(.33333)">
      <path d="m1085 10 20 5-15 8ZM1000 70 1030 55 1005 85 985 103 975 100ZM1105 60l8-5 3 6ZM1155 60l8 0-3 8ZM1200 65l12 2-4 4ZM1255 12l8 3-7 4ZM640 30l50 30 50 18-40-5-50-28Z" fill="#4a97d0" stroke="#4a97d0" strokeWidth="3" />
      <path d="M8 130 60 115 120 118M905 210 960 232 1030 240 1090 255 1140 285" stroke="#fff" strokeWidth="8" strokeDasharray="10 7 5 6" fill="none" opacity=".6" />
      <path d="M1240 185l30 20 50-10 20-20M1290 190l20-20" stroke="#f7eedf" strokeWidth="6" fill="none" opacity=".6" />
      <Sea d="M95 165 130 160 142 172 140 182 155 180 165 198 195 222 240 236 270 255 300 262 308 285 310 315H258L235 298 200 292 175 282 208 277 202 271 170 268 150 250 130 225 110 210 97 190Z" />
      <Sea d="M0 200 25 208 45 240 70 252 90 275 130 298 150 315H0Z" />
      <Sea d="M555 238 577 205 580 182 605 180 608 165 628 152 640 138 668 132 680 142 705 150 722 153 695 165 725 178 728 193 765 190 780 182 800 182 840 185 870 198 912 215 930 235 960 252 966 275 950 295 900 300 840 290 800 270 760 268 710 275 675 300 640 300 600 290 570 280 550 255Z" />
      <Sea d="M757 165 780 150 800 135 860 120 895 115 885 128 855 138 845 150 862 163 840 172 790 172 765 175Z" />
      <Sea d="M450 315 480 305 515 298 560 315Z" />
      <Sea d="M1145 165 1180 150 1200 135 1240 120 1280 125 1300 123 1302 165 1270 170 1240 172 1218 188 1240 205 1255 232 1282 247 1288 280 1294 315H1192L1165 280 1140 250 1136 215 1110 195 1130 178Z" />
      <Sea d="M1290 275 1305 264 1328 265 1335 285 1348 298 1320 308 1292 300Z" />
      <Sea d="M1452 165 1470 152 1485 150 1480 172 1475 188 1490 202 1500 182 1502 198 1490 210 1470 192 1462 208 1450 190ZM1500 135 1540 135 1535 145 1502 147ZM1418 268 1430 258 1440 275 1422 280Z" />
      <Sea d="M1450 758 1510 752 1530 770 1572 757V1020H1450Z" />
      <path d="M1450 860q40-20 60 10l-25 40h-35Z" fill="#d5c5ad" />
      <path d="M195 270h45M165 215l50 20M850 250l60 20M580 240l100-40M1490 900l60-70M1500 1000l60-90" stroke="#7bb3e0" strokeWidth="5" fill="none" opacity=".5" />
    </g>
    <path d="M214.500 60v338M312.500 60v338M411.500 60v338M509.500 60v338M607.500 60v338M706.500 60v338" stroke="#7b5a40" fill="none" opacity=".55" />
    <path d="M207 70.500h522M207 169.500h522M207 267.500h522M207 366.500h522" stroke="#7b6440" fill="none" opacity=".4" />
  </MapSvg>
);

/* ---------- Form controls ---------- */

const frame = css`
  border: 1px solid #b9b6b2;
  border-radius: 2px;
`;
const SelectWrap = styled.span<{ $w?: number; $plain?: boolean }>`
  position: relative;
  display: flex;
  align-items: center;
  flex: none;
  width: ${(p) => p.$w ?? 108}px;
  height: ${(p) => (p.$plain ? 13 : 14)}px;
  ${frame}
  background: ${(p) => (p.$plain ? "#fff" : "linear-gradient(#fefefe, #ecebe9)")};
  select {
    appearance: none;
    width: 100%;
    padding: 0 12px 0 3px;
    border: 0;
    background: none;
    line-height: 12px;
  }
  > svg:last-child {
    position: absolute;
    right: 3px;
    top: 3px;
    pointer-events: none;
  }
  > svg:first-child { margin-left: 3px; }
`;
const UpDown = () => (
  <Svg $s={6} viewBox="0 0 6 6" aria-hidden="true"><path d="M1.500 2 3 .3 4.500 2ZM1.500 4.300 3 6 4.500 4.300Z" fill="#45443f" /></Svg>
);
const Select = ({ label, value, w, plain, icon }: { label: string; value: string; w?: number; plain?: boolean; icon?: string }) => (
  <SelectWrap $w={w} $plain={plain}>
    {icon && <Icon name={icon} size={10} />}
    <select aria-label={label} defaultValue={value}><option>{value}</option></select>
    {plain ? <Caret /> : <UpDown />}
  </SelectWrap>
);
const Spin = styled.span<{ $w: number }>`
  display: flex;
  flex: none;
  width: ${(p) => p.$w}px;
  height: 14px;
  ${frame}
  background: #fff;
  input { flex: 1; min-width: 0; padding: 0 3px; border: 0; background: none; }
  span { width: 9px; display: grid; place-items: center; background: #f2f1f0; border-left: 1px solid #d5d3d0; }
`;
const Range = styled.input<{ $fill: number }>`
  appearance: none;
  flex: 1;
  min-width: 0;
  height: 12px;
  margin: 0;
  background: linear-gradient(90deg, #e9512b ${(p) => p.$fill}%, #c9c7c4 ${(p) => p.$fill}%) center / 100% 2px no-repeat;
  &::-webkit-slider-thumb {
    appearance: none;
    width: 7px;
    height: 11px;
    border: 1px solid #96938f;
    border-radius: 3px 3px 4px 4px;
    background: linear-gradient(#fff, #dcdad8);
  }
`;
const Button = styled.button<{ $w?: number; $primary?: boolean }>`
  position: relative;
  height: 14px;
  padding: 0 3px;
  ${(p) => (p.$w ? `width: ${p.$w}px; flex: none;` : "flex: 1 1 auto;")}
  ${frame}
  background: ${(p) => (p.$primary ? "linear-gradient(#fba98a, #f08763)" : "linear-gradient(#fefefe, #ecebe9)")};
  border-color: ${(p) => (p.$primary ? "#c87e62" : "#b9b6b2")};
  line-height: 12px;
  white-space: nowrap;
  svg { position: absolute; right: 3px; top: 3px; }
`;

/* ---------- Dialog ---------- */

const Dialog = styled.section`
  position: absolute;
  left: 135px;
  right: 33px;
  top: 164px;
  bottom: 20px;
  display: flex;
  flex-direction: column;
  border-radius: 5px 5px 0 0;
  background: #f2f1f0;
  box-shadow: 0 1px 4px rgba(0, 0, 0, 0.65);
`;
const DialogBody = styled.div`
  display: flex;
  flex: 1;
  min-height: 0;
`;
const Nav = styled.nav`
  flex: none;
  width: 90px;
  display: flex;
  flex-direction: column;
  justify-content: space-between;
  padding-bottom: 15px;
  background: #5b5a59;
  border-left: 1px solid #73716e;
`;
const NavItem = styled.button<{ $on?: boolean }>`
  display: flex;
  align-items: center;
  gap: 4px;
  height: 20px;
  padding: 0 0 0 2px;
  border: 0;
  text-align: left;
  white-space: nowrap;
  color: ${(p) => (p.$on ? "#333" : "#f8f7f6")};
  background: ${(p) => (p.$on ? "#f2f1f0" : "none")};
`;
const Main = styled.div`
  flex: 1;
  min-width: 0;
  display: flex;
  flex-direction: column;
  padding: 0 3px 3px;
`;
const ScrollArea = styled.div`
  display: flex;
  flex: 1;
  min-height: 0;
  overflow: hidden;
`;
const Form = styled.div`
  flex: 1;
  min-width: 0;
`;
const Row = styled.div<{ $h?: number; $pad?: string }>`
  display: flex;
  align-items: center;
  height: ${(p) => p.$h ?? 20}px;
  padding: ${(p) => p.$pad ?? "0 6px 0 9px"};
  white-space: nowrap;
`;
const Label = styled.label<{ $w?: number }>`
  flex: none;
  width: ${(p) => (p.$w ? `${p.$w}px` : "auto")};
`;
const Fill = styled.span`
  flex: 1;
`;
const Gap = styled.span`
  flex: none;
  width: 5px;
`;
const ScrollBar = styled.span<{ $thumb: number }>`
  flex: none;
  width: 8px;
  margin: 2px 0 1px 1px;
  border: 1px solid #cbc8c5;
  border-radius: 3px;
  background: #e5e3e1;
  display: flex;
  flex-direction: column;
  align-items: center;
  justify-content: space-between;
  i { margin-top: 7px; width: 6px; height: ${(p) => p.$thumb}px; border: 1px solid #b3b0ac; border-radius: 3px; background: #f9f9f8; }
`;
const Columns = styled.div`
  display: grid;
  grid-template-columns: 144px minmax(0, 1fr);
  gap: 3px;
  margin-top: 3px;
`;
const Preview = styled.div`
  display: grid;
  place-items: center;
  height: 58px;
  border: 1px solid #cfccca;
  &::after { content: ""; width: 56px; height: 1px; background: #8f6a4b; }
`;
const Group = styled.div`
  height: 120px;
  padding: 4px 4px 0 5px;
  border: 1px solid #cfccca;
`;
const SymbolTree = styled.div`
  height: 40px;
  border: 1px solid #c0bdba;
  background: #fff;
  color: #222;
  div { display: flex; align-items: center; gap: 4px; height: 18px; padding-left: 4px; font-weight: 700; background: linear-gradient(#efeeed, #dad8d6); }
  p { margin: 0; padding: 3px 0 0 36px; line-height: 12px; }
`;
const ColorButton = styled.button`
  width: 56px;
  height: 13px;
  padding: 0;
  border: 2px solid #f5f4f3;
  outline: 1px solid #b9b6b2;
  outline-offset: -1px;
  border-radius: 3px;
  background: #6e3f0c;
`;
const StyleBox = styled.div`
  display: flex;
  height: 44px;
  margin-top: 2px;
`;
const StyleList = styled.div`
  flex: 1;
  min-width: 0;
  display: flex;
  justify-content: space-between;
  padding: 11px 25px 0 4px;
  border: 1px solid #c0bdba;
  background: #fff;
`;
const Swatch = styled.svg`
  width: 27px;
  height: 12px;
`;
const Buttons = styled.div`
  display: flex;
  gap: 4px;
  margin-top: 3px;
`;

/* ---------- Status bar ---------- */

const StatusBar = styled.footer`
  display: flex;
  flex: none;
  align-items: center;
  height: 19px;
  padding: 0 14px 0 249px;
  white-space: nowrap;
  border-top: 1px solid #d3d1ce;
  border-bottom: 1px solid #aaa8a5;
`;
const CoordLabel = styled(Label)`
  margin-left: 7px;
`;
const Coord = styled.input`
  flex: 1;
  min-width: 0;
  height: 11px;
  margin: 0 6px 0 5px;
  padding: 0;
  ${frame}
  background: #fff;
  line-height: 9px;
  text-align: center;
`;
const StatusIcon = styled.span`
  margin: 0 5px;
`;
const Crs = styled.span`
  margin: 0 7px 0 9px;
  color: #a09e9b;
`;

const swatches: ReactNode[] = [
  <g key="a"><path d="M0 6h27" stroke="#1f8f16" strokeWidth="3" /><path d="M0 6h27" stroke="#5fe01c" strokeWidth="3" strokeDasharray="4 3" /></g>,
  <path key="b" d="M0 6h27" stroke="#b5daf6" strokeWidth="4" />,
  <path key="c" d="M0 6h27" stroke="#b5daf6" strokeWidth="4" />,
  <g key="d"><path d="M0 6h27" stroke="#35110d" strokeWidth="4" /><path d="M0 6h27" stroke="#e52c20" strokeWidth="3" strokeDasharray="3 1" /></g>,
  <g key="e" fill="none" stroke="#222"><path d="M0 3h3v6H0M9.500 3h6v6h-6ZM27 3h-4v6h4" /><path d="M11.500 5h2v2h-2ZM0 5.500h1v1H0ZM25 5.500h1v1h-1Z" fill="#1c2c67" stroke="none" /></g>,
  <path key="f" d="M0 6h27" stroke="#ad8f84" strokeDasharray="2 1" />,
  <path key="g" d="M0 6h27" stroke="#a8cfe9" strokeWidth="7" />,
  <g key="h"><path d="M0 6h27" stroke="#8b7d67" strokeWidth="4" /><path d="M0 6h27" stroke="#d6e2ea" strokeWidth="2" /></g>,
];

const nav: [string, string][] = [
  ["general", "Allgemein"], ["style", "Stil"], ["labels", "Beschriftungen"], ["fields", "Felder"], ["rendering", "Darstellung"],
  ["display", "Anzeigen"], ["actions", "Aktionen"], ["joins", "Verknüpfungen"], ["diagrams", "Diagramme"], ["metadata", "Metadaten"],
];

export default function App() {
  return (
    <Window>
      <GlobalStyle />
      <TitleBar>
        <WindowButton aria-label="Schließen"><WinGlyph d="M1.500 1.500l3 3m0-3-3 3" /></WindowButton>
        <WindowButton aria-label="Minimieren"><WinGlyph d="M1 3h4" /></WindowButton>
        <WindowButton aria-label="Maximieren"><WinGlyph d="M1.500 1.500h3v3h-3Z" /></WindowButton>
        <WinTitle>QGIS 2.2.0-Valmiera - Valmiera Test</WinTitle>
      </TitleBar>
      <ToolBar>
        <Tools items="| fileNew open save saveAs composer composerMgr | pan panSel zoomIn zoomOut zoomOne zoomFull zoomSel zoomLayer zoomLast zoomNext refresh | identify action w select v deselect epsilon table abacus measure v tip bookNew book label v" />
      </ToolBar>
      <ToolBar>
        <Tools items="| pencils x pencil saveGray nodeGray blobGray nodeTool del cut copy paste vTool areaTool | earth wrench profile bluemap | undo redo blobSave rings blobRing blobDual blobFade blobDel blobDual reshape offset split splitTwo merge brush rotate | |" />
      </ToolBar>
      <Work>
        <SideTools>
          <Grip $flat />
          <Tools items="vector raster postgis spatialite mssql wms wcs wfs comma" />
          <SplitTool><Tools items="newVector v" /></SplitTool>
          <Tools items="remove" />
        </SideTools>
        <LayerPanel>
          <PanelHead>
            <h2>Layer</h2>
            <TinyButton aria-label="Abdocken"><WinGlyph d="M2.500.500h3v3h-3ZM.500 2.500h3v3h-3Z" /></TinyButton>
            <TinyButton aria-label="Schließen"><WinGlyph d="M1 1l4 4m0-4-4 4" /></TinyButton>
          </PanelHead>
          <Tree>
            <TreeRow>
              <Expander><Caret /></Expander>
              <Check type="checkbox" id="l1" /><Icon name="polySym" size={11} /><label htmlFor="l1">ne_10m_geography_regions_...</label>
            </TreeRow>
            <TreeRow $sel>
              <Expander><Caret /></Expander>
              <Check type="checkbox" id="l2" defaultChecked /><Icon name="lineSym" size={11} /><label htmlFor="l2">ne_10m_graticules_10</label>
            </TreeRow>
            <SymbolRow />
            <TreeRow>
              <Expander />
              <Check type="checkbox" id="l3" defaultChecked /><Icon name="rasterSym" size={11} /><label htmlFor="l3">NE2_HR_LC_SR_W_DR</label>
            </TreeRow>
          </Tree>
          <TabRow>
            <Tab $on>Layer</Tab>
            <Tab>Layerreihenfolge</Tab>
          </TabRow>
        </LayerPanel>
        <MapView />
      </Work>
      <StatusBar>
        <Icon name="cursorPos" size={10} />
        <CoordLabel htmlFor="coord">Koordinate:</CoordLabel>
        <Coord id="coord" defaultValue="9.37,44.57" />
        <Label $w={40}>Maßstab</Label>
        <Select label="Maßstab" value=".896.079" w={55} plain />
        <StatusIcon><Icon name="stop" size={10} /></StatusIcon>
        <Check type="checkbox" id="render" defaultChecked />
        <Label htmlFor="render">Zeichnen</Label>
        <Crs>EPSG:4326</Crs>
        <Icon name="crs" size={10} />
      </StatusBar>

      <Dialog role="dialog" aria-label="Layereigenschaften">
        <TitleBar $dialog>
          <WindowButton $active aria-label="Schließen"><WinGlyph d="M1.500 1.500l3 3m0-3-3 3" /></WindowButton>
          <WindowButton aria-label="Maximieren"><WinGlyph d="M1.500 1.500h3v3h-3Z" /></WindowButton>
          <WinTitle>Layereigenschaften - ne_10m_graticules_10 | Stil</WinTitle>
        </TitleBar>
        <DialogBody>
          <Nav>
            {nav.map(([icon, text]) => (
              <NavItem key={text} $on={text === "Stil"}><Icon name={icon} size={14} />{text}</NavItem>
            ))}
          </Nav>
          <Main>
            <ScrollArea>
              <Form>
                <Row $h={14} $pad="0 0 0 1px"><Expander><Caret /></Expander>Layerdarstellung</Row>
                <Row>
                  <Label $w={113} htmlFor="lt">Layertransparenz</Label>
                  <Range id="lt" type="range" $fill={50} defaultValue={50} />
                  <Gap />
                  <Spin $w={33}><input aria-label="Prozent" defaultValue="50" /><span><UpDown /></span></Spin>
                </Row>
                <Row>
                  <Label $w={112}>Layermischmodi</Label>
                  <Select label="Layermischmodi" value="Normal" />
                  <Gap />
                  <Label>Objektmischmodi</Label>
                  <Fill />
                  <Select label="Objektmischmodi" value="Normal" />
                </Row>
                <Row $h={21} $pad="6px 0 0"><Select label="Renderer" value="Einzelsymbol" icon="single" w={86} /></Row>
                <Columns>
                  <div>
                    <Preview />
                    <Row $h={15} $pad="0">Symbollayer</Row>
                    <SymbolTree>
                      <div><Caret /><svg width="10" height="2" aria-hidden="true"><path d="M0 1h10" stroke="#a47552" /></svg>Line</div>
                      <p>Einfache Linie</p>
                    </SymbolTree>
                  </div>
                  <Group>
                    <Row $h={16} $pad="0"><Label $w={60}>Einheit</Label><Select label="Einheit" value="Millimeter" w={76} /></Row>
                    <Row $h={15} $pad="0 6px 0 0">
                      <Label $w={60} htmlFor="tr">Transparenz 0%</Label>
                      <Range id="tr" type="range" $fill={0} defaultValue={0} />
                      <Gap />
                      <Label $w={78} htmlFor="br">Breite</Label>
                      <Spin $w={74}><input id="br" defaultValue="1,00000" /><span><UpDown /></span></Spin>
                    </Row>
                    <Row $h={15} $pad="0"><Label $w={60}>Farbe</Label><ColorButton aria-label="Farbe" /></Row>
                    <Row $h={17} $pad="0 2px 0 0"><Label>Gespeicherte Stile</Label><Fill /><Select label="Gespeicherte Stile" value="" w={113} plain /></Row>
                    <StyleBox>
                      <StyleList>{swatches.map((s, i) => <Swatch key={i} viewBox="0 0 27 12">{s}</Swatch>)}</StyleList>
                      <ScrollBar $thumb={20}><i /></ScrollBar>
                    </StyleBox>
                  </Group>
                </Columns>
              </Form>
              <ScrollBar $thumb={142}><i /><Caret /></ScrollBar>
            </ScrollArea>
            <Buttons>
              <Button $w={111}>Stil laden...</Button>
              <Button $w={111}>Als Vorgabe speichern</Button>
              <Button>Stilvorgaben wiederherstellen</Button>
              <Button $w={111}>Stil speichern<Caret /></Button>
            </Buttons>
            <Buttons>
              <Button $w={47}>Hilfe</Button>
              <Fill />
              <Button $w={50}>Anwenden</Button>
              <Button $w={51}><u>A</u>bbrechen</Button>
              <Button $w={47} $primary><u>O</u>K</Button>
            </Buttons>
          </Main>
        </DialogBody>
      </Dialog>
    </Window>
  );
}
